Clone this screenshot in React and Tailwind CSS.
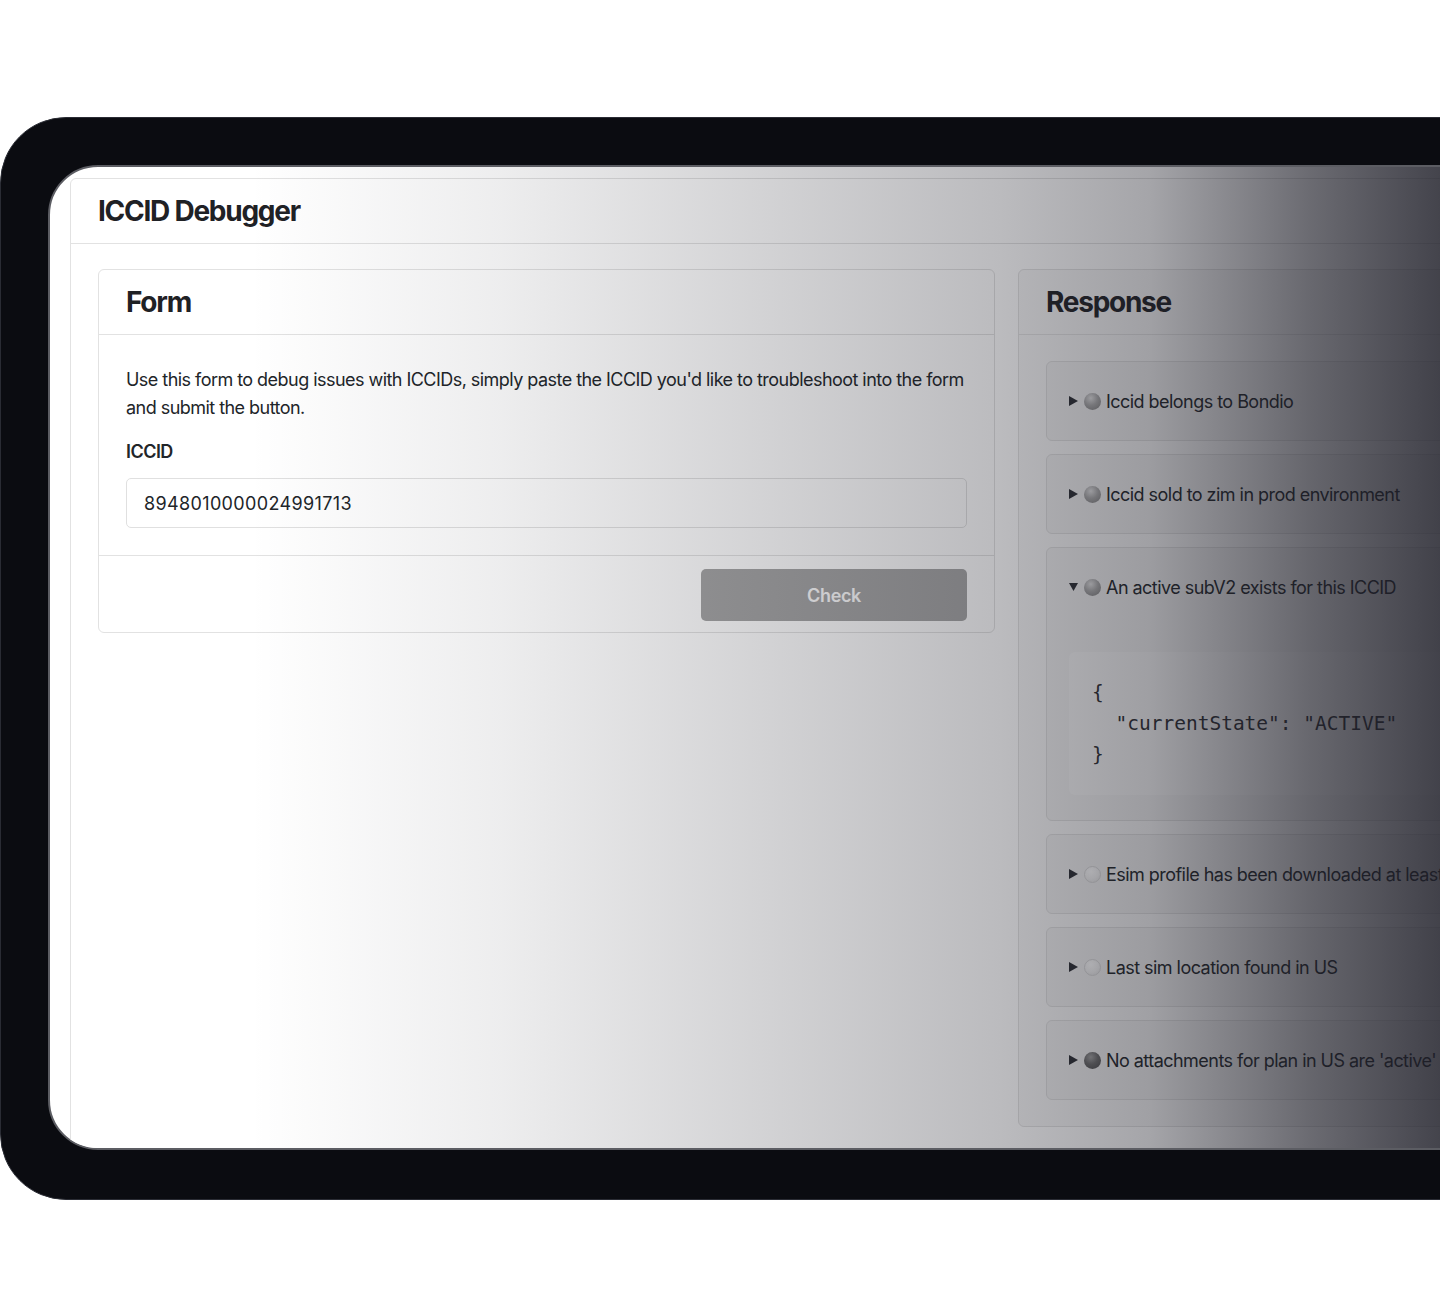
import React, { useState } from 'react';

const checks = [
    { id: 1, label: 'Iccid belongs to Bondio', tone: 'mid' },
    { id: 2, label: 'Iccid sold to zim in prod environment', tone: 'mid' },
    {
        id: 3,
        label: 'An active subV2 exists for this ICCID',
        tone: 'mid',
        open: true,
        payload: { currentState: 'ACTIVE' },
    },
    { id: 4, label: 'Esim profile has been downloaded at least once', tone: 'light' },
    { id: 5, label: 'Last sim location found in US', tone: 'light' },
    { id: 6, label: "No attachments for plan in US are 'active'", tone: 'dark' },
];

const dotTone = {
    mid: 'bg-[radial-gradient(circle_at_40%_30%,#e2e2e2_0%,#a9a9a9_45%,#7d7d7d_100%)]',
    light: 'bg-[radial-gradient(circle_at_40%_30%,#ffffff_0%,#f1f1f1_55%,#dcdcdc_100%)] border border-[#d6d6d6]',
    dark: 'bg-[radial-gradient(circle_at_40%_30%,#a0a0a0_0%,#6a6a6a_45%,#4a4a4a_100%)]',
};

function StatusDot({ tone }) {
    return <span className={`block w-[17px] h-[17px] rounded-full shrink-0 ${dotTone[tone]}`} />;
}

function Caret({ open }) {
    return (
        <svg width="9" height="10" viewBox="0 0 9 10" className="shrink-0">
            {open ? <polygon points="0,1 9,1 4.5,9" fill="#2b2d33" /> : <polygon points="0,0 9,5 0,10" fill="#2b2d33" />}
        </svg>
    );
}

function CheckItem({ item }) {
    const [open, setOpen] = useState(!!item.open);

    return (
        <div className="rounded-md border border-[#dedede] bg-[#f0f0f0] px-[22px] py-[25px]">
            <button
                onClick={() => setOpen(!open)}
                className="flex items-center h-[28px] text-[18px] tracking-[-0.03em] text-[#212529] whitespace-nowrap"
            >
                <Caret open={open} />
                <span className="ml-[6px]"><StatusDot tone={item.tone} /></span>
                <span className="ml-[5px]">{item.label}</span>
            </button>
            {open && item.payload && (
                <pre className="mt-[51px] rounded-md bg-[#f5f5f5] px-[23px] py-[25px] text-[19.5px] leading-[31px] text-[#2a2c31] font-['DejaVu_Sans_Mono',monospace]">
                    {JSON.stringify(item.payload, null, 2)}
                </pre>
            )}
        </div>
    );
}

function Card({ title, children, className = '' }) {
    return (
        <div className={`rounded-md border border-[#e2e2e2] ${className}`}>
            <div className="h-[65px] flex items-center px-[27px] border-b border-[#e2e2e2]">
                <h2 className="text-[28px] font-bold tracking-[-0.045em] text-[#1f2125]">{title}</h2>
            </div>
            {children}
        </div>
    );
}

export default function App() {
    const [iccid, setIccid] = useState('8948010000024991713');

    return (
        <div className="w-[1440px] h-[1314px] overflow-hidden bg-white font-['Inter',sans-serif]">
            <div className="pt-[117px]">
                {/* tablet frame */}
                <div className="w-[1560px] h-[1083px] rounded-[66px] bg-[#0b0c11] border border-[#2a2c34] pt-[47px] pl-[47px] pr-[47px] pb-[49px]">
                    <div className="relative h-full rounded-[50px] border-2 border-[#5c5d63] bg-white overflow-hidden">
                        <div className="pl-[20px] pt-[11px]">
                            <div className="w-[1880px] h-[1100px] rounded-md border border-[#e2e2e2] bg-white">
                                <div className="h-[65px] flex items-center px-[27px] border-b border-[#e2e2e2]">
                                    <h1 className="text-[28px] font-bold tracking-[-0.045em] text-[#1f2125]">ICCID Debugger</h1>
                                </div>

                                <div className="px-[27px] pt-[25px] grid grid-cols-[897px_897px] gap-[23px] items-start">
                                    <Card title="Form" className="bg-white">
                                        <div className="px-[27px] pt-[31px] pb-[27px]">
                                            <p className="text-[18px] leading-[28px] tracking-[-0.03em] text-[#212529]">
                                                Use this form to debug issues with ICCIDs, simply paste the ICCID you'd like to troubleshoot into the form and submit the button.
                                            </p>
                                            <label className="block mt-[16px] text-[18px] leading-[28px] font-semibold tracking-[-0.03em] text-[#212529]">
                                                ICCID
                                            </label>
                                            <input
                                                value={iccid}
                                                onChange={(e) => setIccid(e.target.value)}
                                                className="mt-[12px] w-full h-[50px] rounded-[5px] border border-[#e0e0e0] bg-white px-[17px] text-[18px] tracking-[0.02em] text-[#212529] outline-none"
                                            />
                                        </div>
                                        <div className="border-t border-[#e2e2e2] px-[27px] pt-[13px] pb-[11px] flex justify-end">
                                            <button className="w-[266px] h-[52px] rounded-[5px] bg-[#a4a4a4] text-white text-[18px] font-semibold tracking-[-0.02em]">
                                                Check
                                            </button>
                                        </div>
                                    </Card>

                                    <Card title="Response" className="bg-[#f7f7f7]">
                                        <div className="px-[27px] pt-[26px] pb-[26px] flex flex-col gap-[13px]">
                                            {checks.map((item) => (
                                                <CheckItem key={item.id} item={item} />
                                            ))}
                                        </div>
                                    </Card>
                                </div>
                            </div>
                        </div>

                        {/* dark fade over the right side of the screen */}
                        <div className="absolute inset-0 pointer-events-none bg-[linear-gradient(to_right,rgba(30,30,40,0)_200px,rgba(30,30,40,0.08)_450px,rgba(30,30,40,0.17)_650px,rgba(30,30,40,0.3)_950px,rgba(30,30,40,0.4)_1100px,rgba(30,30,40,0.56)_1200px,rgba(30,30,40,0.66)_1260px,rgba(30,30,40,0.83)_1390px)]" />
                    </div>
                </div>
            </div>
        </div>
    );
}
